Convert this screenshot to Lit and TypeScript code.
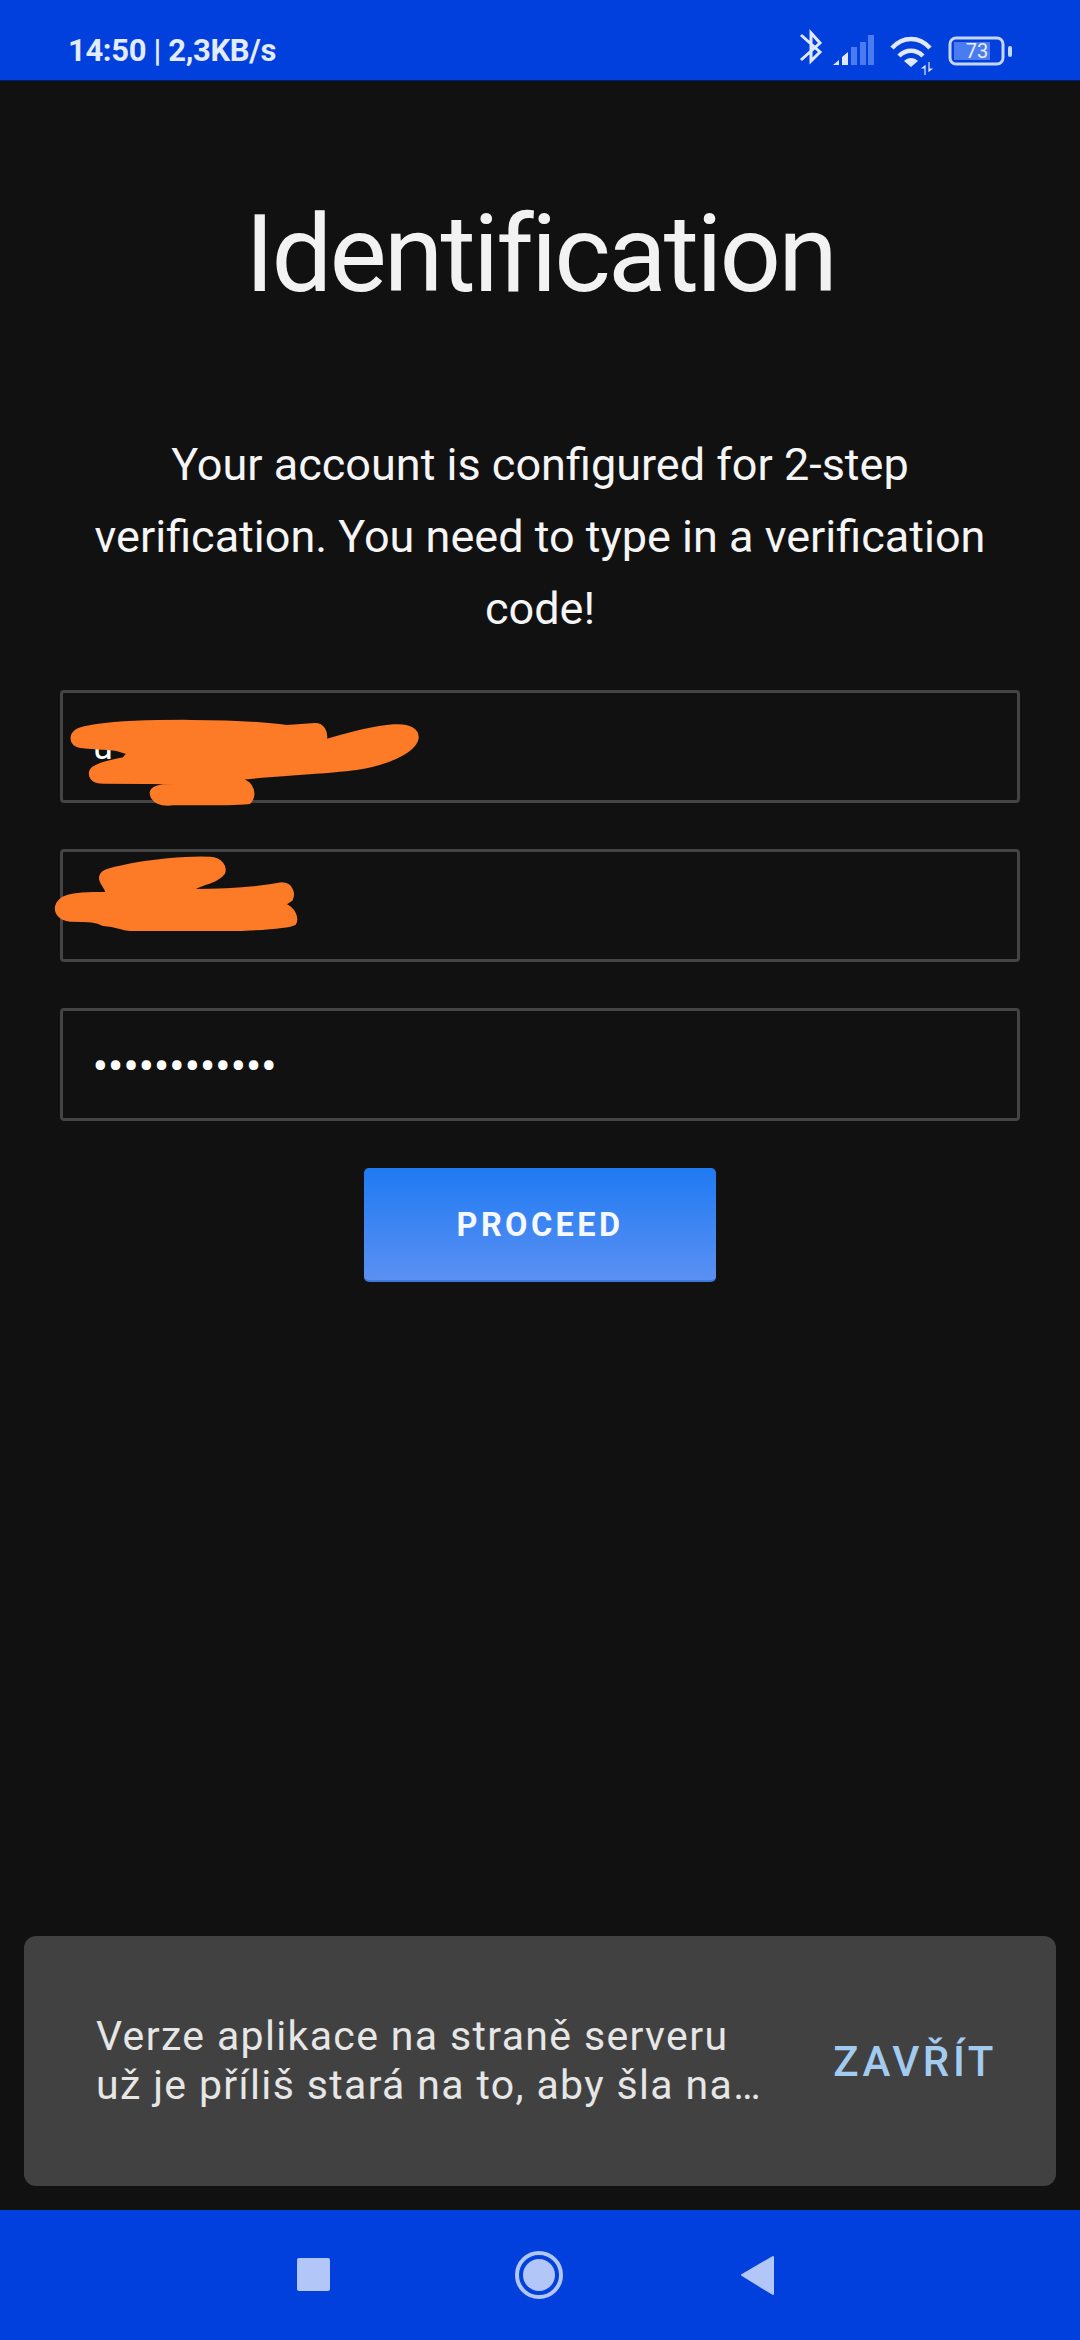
import { LitElement, html, css } from "lit";
import { customElement } from "lit/decorators.js";

@customElement("app-root")
export class AppRoot extends LitElement {
  static styles = css`
    :host { display: block; width: 1080px; height: 2340px; font-family: Roboto, "Noto Sans", sans-serif; }
    .app { position: relative; width: 1080px; height: 2340px; display: flex; flex-direction: column; background: #111111; overflow: hidden; }
    .status { height: 81px; flex: none; background: #0140dc; display: flex; align-items: flex-start; justify-content: space-between; padding: 15px 50px 0 68px; box-sizing: border-box; border-bottom: 1px solid #01206e; }
    .status-text { font-size: 31px; line-height: 72px; font-weight: 700; color: #e3ebff; letter-spacing: -0.35px; }
    .status-icons { display: block; width: 260px; height: 70px; }
    .main { flex: 1; display: flex; flex-direction: column; padding: 0 60px; }
    h1 { margin: 105px 0 0; font-size: 108px; line-height: 136px; font-weight: 400; letter-spacing: -2.9px; color: #f2f2f2; text-align: center; }
    p { margin: 107px 0 0; font-size: 45px; line-height: 72px; font-weight: 400; color: #f5f5f5; text-align: center; }
    .form { display: flex; flex-direction: column; gap: 46px; margin-top: 45px; }
    .field { height: 113px; box-sizing: border-box; border: 3px solid #444444; border-radius: 4px; display: flex; align-items: center; padding: 0 30px; color: #fff; font-size: 36px; }
    .dots { letter-spacing: 0.95px; font-size: 40px; font-weight: 700; padding-top: 3px; }
    .btn { align-self: center; margin-top: 47px; width: 352px; height: 114px; border: none; border-radius: 5px; background: linear-gradient(#1f7af2, #5b90f3); border-bottom: 2px solid #3f78dc; color: #f5f9ff; font: 700 32.5px Roboto, sans-serif; letter-spacing: 3.4px; padding-top: 3px; }
    .snack { position: absolute; left: 24px; top: 1936px; width: 1032px; height: 250px; box-sizing: border-box; background: #414141; border-radius: 12px; display: flex; align-items: center; justify-content: space-between; padding: 0 59px 0 72px; }
    .msg { font-size: 41px; line-height: 49px; color: #e6e6e6; letter-spacing: 1.35px; white-space: nowrap; }
    .close { font-size: 42px; font-weight: 500; color: #a3cbef; letter-spacing: 3.6px; }
    .nav { height: 130px; flex: none; background: #0140dc; display: flex; align-items: center; justify-content: center; }
    .nav svg { display: block; }
    .scribble { position: absolute; left: 40px; top: 670px; width: 420px; height: 300px; }
  `;

  render() {
    return html`<div class="app">
      <div class="status">
        <span class="status-text">14:50 | 2,3KB/s</span>
        <svg class="status-icons" viewBox="0 0 260 70">
          <path d="M31 20 L50 37 L41 46 V18 L50 28 L31 45" fill="none" stroke="#dfe8ff" stroke-width="3"/>
          <g fill="#dfe8ff"><path d="M63 50 L69 45 V50Z"/><path d="M72 42 L78 37 V50 H72Z"/></g>
          <g fill="#4a7bf0"><rect x="81" y="32" width="6" height="18"/><rect x="90" y="27" width="6" height="23"/><rect x="98" y="20" width="6" height="30"/></g>
          <g fill="none" stroke="#dfe8ff" stroke-width="4.5"><path d="M122 33 C133 21 149 21 160 33"/><path d="M129 41 C136 34 146 34 153 41"/></g>
          <path d="M134 46 C138 42 144 42 148 46 L141 52Z" fill="#dfe8ff"/>
          <g fill="#dfe8ff"><path d="M155 60 V51 L152.5 53 H155Z M159 47 V56 L161.5 54 H159Z" stroke="#dfe8ff" stroke-width="1.2"/></g>
          <rect x="180" y="23" width="53" height="26" rx="6" fill="none" stroke="#c6d6ff" stroke-width="3"/>
          <rect x="184" y="27" width="36" height="18" fill="#4a7bf0"/>
          <rect x="238" y="31" width="4" height="11" rx="2" fill="#c6d6ff"/>
          <text x="207" y="43" text-anchor="middle" font-size="20" fill="#e8efff" font-family="Roboto, sans-serif">73</text>
        </svg>
      </div>
      <div class="main">
        <h1>Identification</h1>
        <p>Your account is configured for 2-step verification. You need to type in a verification code!</p>
        <div class="form">
          <div class="field">u</div>
          <div class="field">e</div>
          <div class="field dots">••••••••••••</div>
        </div>
        <button class="btn">PROCEED</button>
      </div>
      <div class="nav">
        <svg width="1080" height="130" viewBox="0 0 1080 130">
          <rect x="297" y="48" width="33" height="33" rx="2" fill="#b3c6f8"/>
          <circle cx="539" cy="65" r="22" fill="none" stroke="#b3c6f8" stroke-width="4"/>
          <circle cx="539" cy="65" r="16" fill="#b3c6f8"/>
          <path d="M773 47 V84 L742 65Z" fill="#b3c6f8" stroke="#b3c6f8" stroke-width="2" stroke-linejoin="round"/>
        </svg>
      </div>
      <div class="snack">
        <div class="msg">Verze aplikace na straně serveru<br>už je příliš stará na to, aby šla na…</div>
        <div class="close">ZAVŘÍT</div>
      </div>
      <svg class="scribble" viewBox="0 0 1260 900">
        <path fill="#fd7a26" stroke="#fd7a26" stroke-width="6" stroke-linejoin="round" d="M95 200 C100 175 130 172 170 165 C300 148 600 148 740 168 L825 162 C850 162 862 185 858 210 C930 190 1000 170 1060 166 C1110 162 1135 180 1133 205 C1125 250 1030 285 950 297 C850 310 700 315 600 327 C640 335 650 375 630 398 C600 405 450 402 400 403 C360 408 335 395 332 370 C332 350 350 345 440 340 L190 338 C160 338 147 325 150 305 C155 285 200 275 250 265 L262 250 L230 240 C190 235 150 235 130 232 C105 230 92 220 95 200Z"/>
        <path fill="#fd7a26" stroke="#fd7a26" stroke-width="6" stroke-linejoin="round" d="M180 625 C180 605 200 598 240 590 C330 570 440 560 510 563 C545 565 560 590 552 610 C535 635 490 640 455 660 C540 660 650 655 725 640 C755 640 765 670 755 690 L735 703 C765 715 775 745 765 762 C740 775 640 778 600 780 L270 780 C245 780 235 768 190 765 C170 755 150 752 90 752 C60 750 45 730 48 710 C55 680 80 668 200 668 C195 650 180 640 180 625Z"/>
      </svg>
    </div>`;
  }
}
